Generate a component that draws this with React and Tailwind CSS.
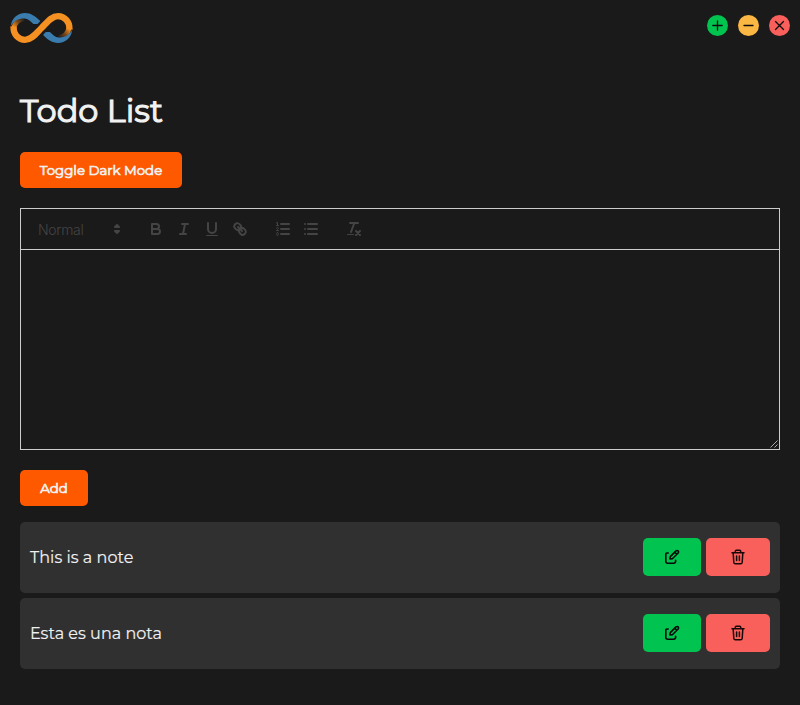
import React from "react";

function Logo() {
  return (
    <svg width="64" height="32" viewBox="0 0 64 32" fill="none" className="block">
      <defs>
        <linearGradient id="foldLeft" x1="4" y1="16" x2="14" y2="7" gradientUnits="userSpaceOnUse">
          <stop offset="0" stopColor="#f59122" />
          <stop offset="0.5" stopColor="#7a4818" />
          <stop offset="1" stopColor="#22201f" />
        </linearGradient>
        <linearGradient id="foldRight" x1="59" y1="16" x2="49" y2="25" gradientUnits="userSpaceOnUse">
          <stop offset="0" stopColor="#f59122" />
          <stop offset="0.5" stopColor="#7a4818" />
          <stop offset="1" stopColor="#22201f" />
        </linearGradient>
      </defs>
      <path d="M4.2 16C4.5 11 9 7 14 6.2" stroke="url(#foldLeft)" strokeWidth="5" />
      <path d="M58.8 16C58.5 21 54 25 49 25.8" stroke="url(#foldRight)" strokeWidth="5" />
      <path d="M0.8 14.5C1.3 6.5 7.5 1 15 1C21 1 25.2 4.3 29.8 8.6Q30.3 9.2 29.8 9.8L27.5 12.1H23.4C20.5 9.3 18 6.7 14.5 6.5C8.5 6.4 3.5 8.5 0.8 14.5Z" fill="#3a7cae" />
      <path d="M62.2 17.5C61.7 25.5 55.5 31 48 31C42 31 37.8 27.7 33.6 23.6Q33 22.9 33.6 22.2L35.8 19.9H39.9C43 22.9 45 25.3 48.5 25.5C54.5 25.6 59.5 23.5 62.2 17.5Z" fill="#3a7cae" />
      <path d="M3.6 14.5C3 22.5 8.6 27.8 15 27.8C21.8 27.8 26 21.5 31.5 16C37 10.5 41.2 4.2 48 4.2C54.4 4.2 60 9.5 59.4 17.5" stroke="#f59122" strokeWidth="6.3" />
    </svg>
  );
}

function QIcon({ children }) {
  return (
    <span className="flex h-6 w-7 items-center justify-center">
      <svg width="18" height="18" viewBox="0 0 18 18" fill="none" stroke="#444" strokeWidth="2" strokeLinecap="round" strokeLinejoin="round">
        {children}
      </svg>
    </span>
  );
}

function WindowButton({ color, d }) {
  return (
    <button className={`flex h-[21px] w-[21px] items-center justify-center rounded-full ${color}`}>
      <svg width="21" height="21" viewBox="0 0 21 21" stroke="#0c0c0c" strokeWidth="1.3" strokeLinecap="round">
        <path d={d} />
      </svg>
    </button>
  );
}

function Note({ text }) {
  return (
    <li className="flex h-[71px] items-center justify-between rounded-[5px] bg-[#303030] px-2.5">
      <span className="text-[16px] tracking-[0.03px] text-[#f1f1f1] [-webkit-text-stroke:0.15px_#f1f1f1]">{text}</span>
      <div className="mb-px flex gap-[5px]">
        <button className="flex h-[38px] w-[58px] items-center justify-center rounded-[5px] bg-[#00c44f]">
          <svg width="16" height="16" viewBox="0 0 16 16" fill="none" stroke="#080808" strokeWidth="1.6" strokeLinecap="round" strokeLinejoin="round">
            <path d="M4.2 4H2.9A1.1 1.1 0 0 0 1.8 5.1V12.4A1.8 1.8 0 0 0 3.6 14.2H9.8A1.8 1.8 0 0 0 11.6 12.4V11.2" />
            <path d="M5.9 9.9L6.3 7.6L12 1.9A1.45 1.45 0 0 1 14.1 4L8.4 9.7ZM10.8 3.2L12.8 5.2" />
          </svg>
        </button>
        <button className="flex h-[38px] w-16 items-center justify-center rounded-[5px] bg-[#f95f5b]">
          <svg width="16" height="16" viewBox="0 0 16 16" fill="none" stroke="#180808" strokeWidth="1.5" strokeLinecap="round" strokeLinejoin="round">
            <path d="M2 3.8H14M5.3 3.6V2.2Q5.3 1.2 6.3 1.2H9.7Q10.7 1.2 10.7 2.2V3.6M3.2 4.2L3.8 13.2Q3.9 14.8 5.4 14.8H10.6Q12.1 14.8 12.2 13.2L12.8 4.2M6.6 7V11.6M9.4 7V11.6" />
          </svg>
        </button>
      </div>
    </li>
  );
}

export default function App() {
  return (
    <div className="h-[705px] w-[800px] overflow-hidden bg-[#1a1a1a] font-['Montserrat','Inter',sans-serif] text-[#f1f1f1]">
      <header className="flex h-[52px] items-start justify-between pl-2.5 pr-2.5">
        <div className="pt-3">
          <Logo />
        </div>
        <div className="flex gap-2.5 pt-[15px]">
          <WindowButton color="bg-[#00c44f]" d="M5.8 10.5H15.2M10.5 5.8V15.2" />
          <WindowButton color="bg-[#fab744]" d="M6 10.5H15" />
          <WindowButton color="bg-[#f95f5b]" d="M6.5 6.5L14.5 14.5M14.5 6.5L6.5 14.5" />
        </div>
      </header>
      <main className="px-5 pt-[39px]">
        <h1 className="h-10 whitespace-nowrap text-[32px] font-normal leading-10 [-webkit-text-stroke:1.1px_#f1f1f1]">Todo List</h1>
        <button className="mt-[21px] block h-9 w-[162px] whitespace-nowrap rounded-[5px] bg-[#ff5900] pt-px text-[13.333px] font-normal [-webkit-text-stroke:0.7px_#f1f1f1]">Toggle Dark Mode</button>

        <div className="mt-5 flex h-[42px] items-center border border-[#ccc] px-2 font-['Inter',sans-serif]">
          <div className="mr-[15px] flex h-6 w-[98px] items-center justify-between pl-[9px] pr-px text-[14px] font-light text-[#444]">
            <span className="tracking-[-0.3px]">Normal</span>
            <svg width="18" height="18" viewBox="0 0 18 18" fill="#444" stroke="#444" strokeWidth="2" strokeLinejoin="round">
              <path d="M7 11L9 13L11 11ZM7 7L9 5L11 7Z" />
            </svg>
          </div>
          <div className="mr-[15px] flex">
            <QIcon><path d="M5 4H9.5A2.5 2.5 0 0 1 9.5 9H5ZM5 9H10.5A2.5 2.5 0 0 1 10.5 14H5Z" /></QIcon>
            <QIcon><path d="M7 4H13M5 14H11M8 14L10 4" /></QIcon>
            <QIcon>
              <path d="M5 3V9A4 4 0 0 0 13 9V3" />
              <rect x="3" y="15" width="12" height="1" rx="0.5" fill="#444" stroke="none" />
            </QIcon>
            <QIcon>
              <path d="M7 7L11 11" />
              <path d="M8.9,4.577a3.476,3.476,0,0,1,.36,4.679A3.476,3.476,0,0,1,4.577,8.9C3.185,7.5,2.035,6.4,4.217,4.217S7.5,3.185,8.9,4.577Z" />
              <path d="M13.423,9.1a3.476,3.476,0,0,0-4.679-.36,3.476,3.476,0,0,0,.36,4.679c1.392,1.392,2.5,2.542,4.679.36S14.815,10.5,13.423,9.1Z" />
            </QIcon>
          </div>
          <div className="mr-[15px] flex">
            <QIcon>
              <path d="M7 4H15M7 9H15M7 14H15" />
              <path strokeWidth="1" d="M2.5 5.5H4.5M2.5 2.8L3.5 2.4V5.5" />
              <path strokeWidth="1" d="M4.5,10.5h-2c0-.234,1.85-1.076,1.85-2.234A0.959,0.959,0,0,0,2.5,8.156" />
              <path strokeWidth="1" d="M2.5,14.846a0.959,0.959,0,0,0,1.85-.109A0.7,0.7,0,0,0,3.75,14a0.688,0.688,0,0,0,.6-0.736,0.959,0.959,0,0,0-1.85-.109" />
            </QIcon>
            <QIcon><path d="M6 4H15M6 9H15M6 14H15M3 4H3M3 9H3M3 14H3" /></QIcon>
          </div>
          <QIcon>
            <path d="M5 3H13M6 12L9.35 3M11 11L15 15M15 11L11 15" />
            <rect x="2" y="14" width="7" height="1" rx="0.5" fill="#444" stroke="none" />
          </QIcon>
        </div>
        <div className="flex h-[200px] items-end justify-end border border-t-0 border-[#ccc]">
          <svg width="9" height="9" viewBox="0 0 9 9" stroke="#bbb" strokeWidth="0.9">
            <path d="M0.5 7.5L7.5 0.5M4.5 7.5L7.5 4.5" />
          </svg>
        </div>

        <button className="mt-5 block h-9 w-[68px] rounded-[5px] bg-[#ff5900] pt-px text-[13.333px] font-normal [-webkit-text-stroke:0.7px_#f1f1f1]">Add</button>
        <ul className="mt-4 flex flex-col gap-[5px]">
          <Note text="This is a note" />
          <Note text="Esta es una nota" />
        </ul>
      </main>
    </div>
  );
}
